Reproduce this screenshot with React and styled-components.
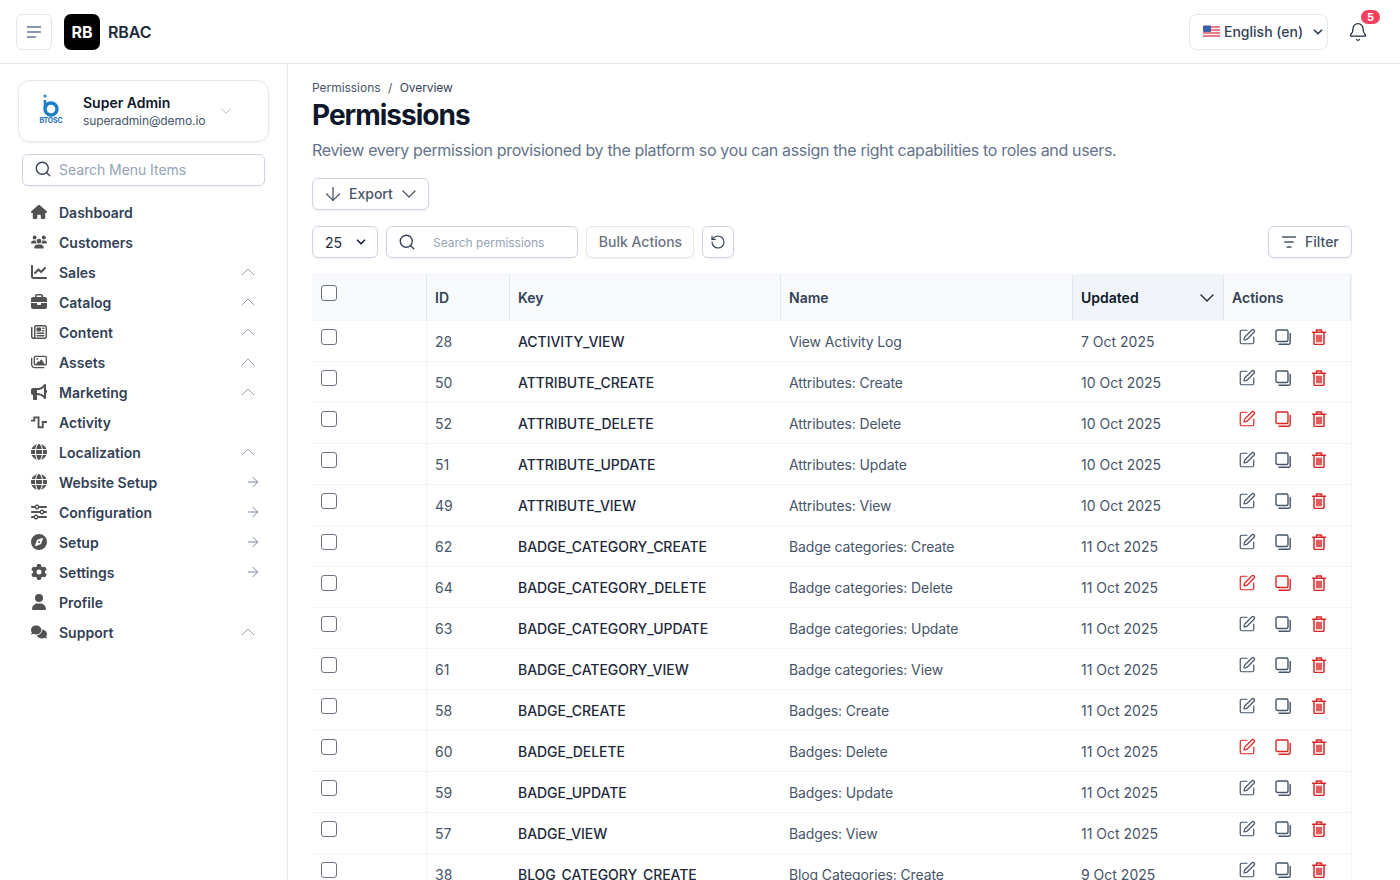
import React from "react";
import styled, { createGlobalStyle } from "styled-components";
import {
  FaHouse, FaUsers, FaChartLine, FaBriefcase, FaRegNewspaper, FaRegImages, FaBullhorn,
  FaGlobe, FaSliders, FaCompass, FaGear, FaUser, FaComments,
} from "react-icons/fa6";
import { ChevronDown, ChevronUp, ArrowRight, ArrowDown, Search, RotateCcw, Bell, SquarePen } from "lucide-react";

const Global = createGlobalStyle`
  * { box-sizing: border-box; }
  html, body { margin: 0; height: 100%; overflow: hidden; background: #fff; }
  body { font-family: Inter, "Liberation Sans", sans-serif; color: #334155; }
  #root { height: 100%; }
`;

const Page = styled.div`display:flex;flex-direction:column;height:880px;overflow:hidden;`;
const Header = styled.header`
  height:64px;flex:none;display:flex;align-items:center;padding:0 16px;
  border-bottom:1px solid #e2e8f0;background:#fff;
`;
const MenuButton = styled.button`
  width:36px;height:36px;border:1px solid #e2e8f0;border-radius:6px;background:#fff;padding:0;
  display:flex;align-items:center;justify-content:center;color:#64748b;margin-right:12px;
`;
const LogoBox = styled.div`
  width:36px;height:36px;border-radius:7px;background:#000;color:#fff;font-weight:700;font-size:16px;
  display:flex;align-items:center;justify-content:center;margin-right:8px;
`;
const Brand = styled.div`font-size:16px;font-weight:600;color:#1e293b;letter-spacing:-.1px;`;
const Spacer = styled.div`flex:1;`;
const LangSelect = styled.div`
  width:139px;height:36px;border:1px solid #e2e8f0;border-radius:8px;display:flex;align-items:center;
  padding:0 2px 0 13px;font-size:14px;font-weight:500;color:#334155;gap:4px;
`;
const LangText = styled.span`flex:1;white-space:nowrap;`;
const BellWrap = styled.div`position:relative;width:36px;height:36px;margin:0 8px 0 12px;display:flex;align-items:center;justify-content:center;color:#1e293b;`;
const Badge = styled.span`
  position:absolute;top:-4px;right:-4px;width:19px;height:14px;border-radius:7px;background:#f43f5e;color:#fff;
  font-size:11px;font-weight:700;display:flex;align-items:center;justify-content:center;
`;
const Body = styled.div`display:flex;flex:1;min-height:0;`;
const Sidebar = styled.aside`width:288px;flex:none;border-right:1px solid #e2e8f0;padding:16px 18px;`;
const Profile = styled.div`
  width:251px;height:62px;border:1px solid #e2e8f0;border-radius:12px;box-shadow:0 1px 3px rgba(15,23,42,.07);
  display:flex;align-items:center;padding:0 33px 0 20px;
`;
const ProfileText = styled.div`margin-left:20px;flex:1;min-width:0;`;
const ProfileName = styled.div`font-size:14px;font-weight:600;color:#0f172a;line-height:20px;`;
const ProfileMail = styled.div`font-size:12px;color:#475569;line-height:16px;white-space:nowrap;letter-spacing:-.1px;`;
const LogoMark = styled.div`width:24px;display:flex;flex-direction:column;align-items:center;margin-top:-3px;`;
const LogoCaption = styled.span`font-size:7px;font-weight:700;color:#1d6fb8;line-height:8px;letter-spacing:-.2px;`;
const MenuSearch = styled.div`
  margin:12px 0 11px 4px;width:243px;height:32px;border:1px solid #cbd5e1;border-radius:6px;display:flex;align-items:center;
  padding:0 0 2px 11px;gap:7px;color:#334155;box-shadow:0 1px 2px rgba(15,23,42,.05);
`;
const Hint = styled.span`font-size:14px;color:#94a3b8;letter-spacing:-.05px;`;
const Nav = styled.nav`display:flex;flex-direction:column;`;
const NavRow = styled.div`height:30px;display:flex;align-items:center;padding-left:13px;color:#525252;`;
const NavIcon = styled.span`width:16px;height:17px;display:flex;align-items:center;justify-content:center;margin-right:12px;flex:none;font-size:16px;`;
const NavLabel = styled.span`flex:1;font-size:14px;font-weight:600;color:#334155;`;
const NavEnd = styled.span`display:flex;color:${p => p.$c || "#94a3b8"};margin-right:${p => p.$m}px;`;

const Main = styled.main`flex:1;min-width:0;padding:16px 48px 0 24px;overflow:hidden;`;
const Crumbs = styled.div`font-size:12px;line-height:16px;color:#475569;display:flex;gap:7.5px;letter-spacing:-.04px;`;
const CrumbNow = styled.span`color:#334155;letter-spacing:-.1px;`;
const Title = styled.h1`margin:1px 0 0;font-size:28px;line-height:36px;font-weight:700;color:#0f172a;letter-spacing:-1px;`;
const Sub = styled.p`margin:5px 0 0;font-size:16px;line-height:24px;color:#64748b;letter-spacing:-.34px;`;
const ExportButton = styled.button`
  margin-top:16px;width:117px;height:32px;border:1px solid #cbd5e1;border-radius:6px;background:#fff;display:flex;align-items:center;
  padding:0 0 1px 9px;font:500 14px Inter,sans-serif;color:#475569;gap:5px;box-shadow:0 1px 2px rgba(15,23,42,.05);
`;
const ExportCaret = styled.span`display:flex;margin-left:-1px;`;
const Toolbar = styled.div`display:flex;align-items:center;margin-top:16px;gap:8px;height:32px;`;
const Box = styled.div`
  height:32px;border:1px solid ${p => p.$light ? "#e2e8f0" : "#cbd5e1"};border-radius:6px;background:#fff;display:flex;align-items:center;
  box-shadow:0 1px 2px rgba(15,23,42,.05);font-size:14px;
`;
const PageSize = styled(Box)`width:66px;padding:0 9px 0 12px;justify-content:space-between;color:#1e293b;`;
const TableSearch = styled(Box)`width:192px;padding:0 0 0 11px;gap:17px;color:#334155;`;
const SmallHint = styled.span`font-size:12px;color:#94a3b8;letter-spacing:-.03px;`;
const Bulk = styled(Box)`width:108px;justify-content:center;font-weight:500;color:#6b7280;padding:0 0 1px 1px;`;
const Reset = styled(Box)`width:32px;justify-content:center;color:#334155;`;
const FilterBtn = styled(Box)`width:84px;margin-left:auto;padding:0 12px 1px;gap:8px;font-weight:500;color:#475569;`;
const Table = styled.table`
  margin-top:16px;width:1040px;border-collapse:separate;border-spacing:0;table-layout:fixed;font-size:14px;border-right:1px solid #f1f5f9;
`;
const Th = styled.th`
  height:47px;background:${p => p.$sorted ? "#f1f5f9" : "#f8fafc"};border-top:1px solid #f1f5f9;border-bottom:1px solid #f1f5f9;
  border-right:1px solid #e2e8f0;
  text-align:left;padding:0 8px;font-weight:600;color:${p => p.$sorted ? "#0f172a" : "#334155"};vertical-align:middle;
`;
const CheckTh = styled(Th)`padding-left:9px;`;
const HeadSplit = styled.div`display:flex;align-items:center;justify-content:space-between;`;
const SortCaret = styled.span`display:flex;margin-right:-4px;color:#1e293b;`;
const Td = styled.td`
  height:41px;border-bottom:1px solid #f1f5f9;padding:0 8px;color:${p => p.$strong ? "#1e293b" : "#475569"};font-weight:${p => p.$strong ? 500 : 400};
  vertical-align:middle;white-space:nowrap;border-right:${p => p.$sep ? "1px solid #f1f5f9" : "0"};
  letter-spacing:${p => p.$strong ? "-.05px" : "0"};
`;
const NameCell = styled(Td)`letter-spacing:-.12px;`;
const TopCell = styled(Td)`vertical-align:top;padding-top:8px;`;
const CheckCell = styled(TopCell)`padding-left:9px;`;
const Check = styled.input.attrs({ type: "checkbox" })`
  appearance:none;display:block;width:16px;height:16px;margin:0;border:1px solid #6b7280;border-radius:3px;background:#fff;
`;
const HeadCheck = styled(Check)`margin-top:-10px;`;
const Actions = styled.div`display:flex;gap:20px;padding-left:7px;color:#475569;`;
const Act = styled.span`display:flex;flex:none;width:16px;height:16px;color:${p => p.$c};`;
const PenWrap = styled.span`display:flex;margin:-1px;`;

const Lines = () => (
  <svg width="16" height="16" viewBox="0 0 16 16" fill="none" stroke="currentColor" strokeWidth="1.3" strokeLinecap="round">
    <path d="M1.5 3h13M1.5 8h13M1.5 13h8" />
  </svg>
);
const Flag = () => (
  <svg width="17" height="13" viewBox="0 0 17 13">
    <rect width="17" height="12" y=".5" rx="1.5" fill="#f6f6f8" />
    <path d="M0 2h17M0 5h17M0 8h17M0 11h17" stroke="#e25563" strokeWidth="1.6" />
    <rect width="8" height="6.5" y=".5" rx="1" fill="#3f5ea8" />
  </svg>
);
const BLogo = () => (
  <svg width="18" height="23" viewBox="0 0 18 23" fill="none">
    <circle cx="3" cy="2" r="1.5" fill="#1d7fc9" />
    <path d="M3 6v9" stroke="#1d7fc9" strokeWidth="2.6" />
    <circle cx="9" cy="15" r="6" stroke="#1d7fc9" strokeWidth="3.4" />
  </svg>
);
const Pulse = () => (
  <svg width="17" height="17" viewBox="0 0 17 17" fill="none" stroke="currentColor" strokeWidth="2">
    <path d="M0 6.5h3.5V3H8v10.5h4.5V8H17" />
  </svg>
);
const CopyIcon = () => (
  <svg width="16" height="16" viewBox="0 0 16 16" fill="none" stroke="currentColor" strokeWidth="1.4" strokeLinecap="round" strokeLinejoin="round">
    <rect x="1" y="1" width="12" height="11.5" rx="1.5" />
    <path d="M15.2 4.5v9.2a1.6 1.6 0 0 1-1.6 1.6H4" />
  </svg>
);
const TrashIcon = () => (
  <svg width="16" height="16" viewBox="0 0 16 16" fill="none" stroke="currentColor" strokeWidth="1.5" strokeLinecap="round" strokeLinejoin="round">
    <path d="M1.5 3.2h13M5.5 3V1h5v2M3 3.5v10.7A1.3 1.3 0 0 0 4.3 15.5h7.4a1.3 1.3 0 0 0 1.3-1.3V3.5M6 6.2v6.5M8 6.2v6.5M10 6.2v6.5" />
  </svg>
);
const FilterIcon = () => (
  <svg width="16" height="16" viewBox="0 0 16 16" fill="none" stroke="currentColor" strokeWidth="1.3" strokeLinecap="round">
    <path d="M1.5 3h13M3.8 8h8.4M6 13h4" />
  </svg>
);

const nav = [
  ["Dashboard", FaHouse],
  ["Customers", FaUsers],
  ["Sales", FaChartLine, "up"],
  ["Catalog", FaBriefcase, "up"],
  ["Content", FaRegNewspaper, "up"],
  ["Assets", FaRegImages, "up"],
  ["Marketing", FaBullhorn, "up"],
  ["Activity", Pulse],
  ["Localization", FaGlobe, "up"],
  ["Website Setup", FaGlobe, "arrow"],
  ["Configuration", FaSliders, "arrow"],
  ["Setup", FaCompass, "arrow"],
  ["Settings", FaGear, "arrow"],
  ["Profile", FaUser],
  ["Support", FaComments, "up"],
];

const rows = [
  [28, "ACTIVITY_VIEW", "View Activity Log", "7 Oct 2025"],
  [50, "ATTRIBUTE_CREATE", "Attributes: Create", "10 Oct 2025"],
  [52, "ATTRIBUTE_DELETE", "Attributes: Delete", "10 Oct 2025", true],
  [51, "ATTRIBUTE_UPDATE", "Attributes: Update", "10 Oct 2025"],
  [49, "ATTRIBUTE_VIEW", "Attributes: View", "10 Oct 2025"],
  [62, "BADGE_CATEGORY_CREATE", "Badge categories: Create", "11 Oct 2025"],
  [64, "BADGE_CATEGORY_DELETE", "Badge categories: Delete", "11 Oct 2025", true],
  [63, "BADGE_CATEGORY_UPDATE", "Badge categories: Update", "11 Oct 2025"],
  [61, "BADGE_CATEGORY_VIEW", "Badge categories: View", "11 Oct 2025"],
  [58, "BADGE_CREATE", "Badges: Create", "11 Oct 2025"],
  [60, "BADGE_DELETE", "Badges: Delete", "11 Oct 2025", true],
  [59, "BADGE_UPDATE", "Badges: Update", "11 Oct 2025"],
  [57, "BADGE_VIEW", "Badges: View", "11 Oct 2025"],
  [38, "BLOG_CATEGORY_CREATE", "Blog Categories: Create", "9 Oct 2025"],
];

export default function App() {
  return (
    <Page>
      <Global />
      <Header>
        <MenuButton aria-label="Menu"><Lines /></MenuButton>
        <LogoBox>RB</LogoBox>
        <Brand>RBAC</Brand>
        <Spacer />
        <LangSelect>
          <Flag />
          <LangText>English (en)</LangText>
          <ChevronDown size={14} strokeWidth={3} />
        </LangSelect>
        <BellWrap>
          <Bell size={20} strokeWidth={1.5} />
          <Badge>5</Badge>
        </BellWrap>
      </Header>
      <Body>
        <Sidebar>
          <Profile>
            <LogoMark><BLogo /><LogoCaption>BTOSC</LogoCaption></LogoMark>
            <ProfileText>
              <ProfileName>Super Admin</ProfileName>
              <ProfileMail>superadmin@demo.io</ProfileMail>
            </ProfileText>
            <NavEnd $m={0}><ChevronDown size={18} strokeWidth={1} /></NavEnd>
          </Profile>
          <MenuSearch>
            <Search size={18} strokeWidth={1.8} />
            <Hint>Search Menu Items</Hint>
          </MenuSearch>
          <Nav>
            {nav.map(([label, Icon, end]) => (
              <NavRow key={label}>
                <NavIcon><Icon /></NavIcon>
                <NavLabel>{label}</NavLabel>
                {end === "up" && <NavEnd $m={9}><ChevronUp size={24} strokeWidth={1} /></NavEnd>}
                {end === "arrow" && <NavEnd $m={8} $c="#7c8ba3"><ArrowRight size={16} strokeWidth={1.5} /></NavEnd>}
              </NavRow>
            ))}
          </Nav>
        </Sidebar>
        <Main>
          <Crumbs><span>Permissions</span><span>/</span><CrumbNow>Overview</CrumbNow></Crumbs>
          <Title>Permissions</Title>
          <Sub>Review every permission provisioned by the platform so you can assign the right capabilities to roles and users.</Sub>
          <ExportButton><ArrowDown size={22} strokeWidth={1.4} />Export<ExportCaret><ChevronDown size={24} strokeWidth={1.3} /></ExportCaret></ExportButton>
          <Toolbar>
            <PageSize>25<ChevronDown size={14} strokeWidth={3} /></PageSize>
            <TableSearch><Search size={18} strokeWidth={1.8} /><SmallHint>Search permissions</SmallHint></TableSearch>
            <Bulk $light>Bulk Actions</Bulk>
            <Reset><RotateCcw size={16} strokeWidth={1.7} /></Reset>
            <FilterBtn><FilterIcon />Filter</FilterBtn>
          </Toolbar>
          <Table>
            <colgroup>
              <col style={{ width: 115 }} /><col style={{ width: 83 }} /><col style={{ width: 271 }} />
              <col style={{ width: 292 }} /><col style={{ width: 151 }} /><col />
            </colgroup>
            <thead>
              <tr>
                <CheckTh><HeadCheck aria-label="Select all" /></CheckTh>
                <Th>ID</Th>
                <Th>Key</Th>
                <Th>Name</Th>
                <Th $sorted><HeadSplit>Updated<SortCaret><ChevronDown size={24} strokeWidth={1.4} /></SortCaret></HeadSplit></Th>
                <Th>Actions</Th>
              </tr>
            </thead>
            <tbody>
              {rows.map(([id, key, name, date, red]) => (
                <tr key={id}>
                  <CheckCell $sep><Check aria-label={key} /></CheckCell>
                  <Td>{id}</Td>
                  <Td $strong>{key}</Td>
                  <NameCell>{name}</NameCell>
                  <Td>{date}</Td>
                  <TopCell>
                    <Actions>
                      <Act $c={red ? "#dc2626" : "#475569"}><PenWrap><SquarePen size={18} strokeWidth={1.6} /></PenWrap></Act>
                      <Act $c={red ? "#dc2626" : "#475569"}><CopyIcon /></Act>
                      <Act $c="#dc2626"><TrashIcon /></Act>
                    </Actions>
                  </TopCell>
                </tr>
              ))}
            </tbody>
          </Table>
        </Main>
      </Body>
    </Page>
  );
}
